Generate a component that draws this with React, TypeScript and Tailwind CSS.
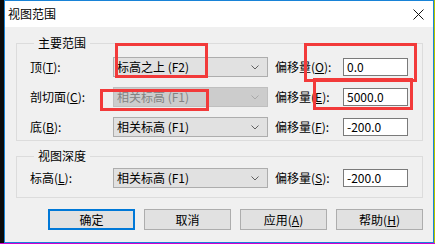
import React from "react";

type RowProps = {
  label: string;
  labelKey: string;
  labelTail?: string;
  value: string;
  disabled?: boolean;
  offsetKey: string;
  offset: string;
};

function Chevron({ disabled }: { disabled?: boolean }) {
  return (
    <svg width="8" height="5" viewBox="0 0 8 5" className="shrink-0">
      <polyline
        points="0.5,0.5 4,4 7.5,0.5"
        fill="none"
        stroke={disabled ? "#a8a8a8" : "#606060"}
        strokeWidth="1"
      />
    </svg>
  );
}

function Row({ label, labelKey, value, disabled, offsetKey, offset }: RowProps) {
  return (
    <div className="flex h-[20px] items-center">
      <div className="w-[83px] shrink-0 text-[12px] leading-[16px]">
        {label}(<u>{labelKey}</u>):
      </div>
      <div
        className={
          disabled
            ? "flex h-[20px] w-[155px] shrink-0 items-center justify-between border border-[#bfbfbf] bg-[#cccccc] pr-[8px] pl-[3px] text-[12px] leading-[16px] text-[#838383]"
            : "flex h-[20px] w-[155px] shrink-0 items-center justify-between border border-[#adadad] bg-[#e1e1e1] pr-[8px] pl-[3px] text-[12px] leading-[16px] text-black"
        }
      >
        <span>{value}</span>
        <Chevron disabled={disabled} />
      </div>
      <div className="ml-[7px] w-[68px] shrink-0 text-[12px] leading-[16px]">
        偏移量(<u>{offsetKey}</u>):
      </div>
      <div className="flex h-[18px] w-[65px] shrink-0 items-center border border-[#7a7a7a] bg-white pl-[3px] text-[12px] leading-[16px]">
        {offset}
      </div>
    </div>
  );
}

function Btn({ children, primary }: { children: React.ReactNode; primary?: boolean }) {
  return (
    <div
      className={
        primary
          ? "flex h-[21px] w-[87px] items-center justify-center border-2 border-[#0078d7] bg-[#e1e1e1] text-[12px] leading-[16px]"
          : "flex h-[21px] w-[87px] items-center justify-center border border-[#adadad] bg-[#e1e1e1] text-[12px] leading-[16px]"
      }
    >
      {children}
    </div>
  );
}

export default function App() {
  return (
    <div
      className="relative flex h-[244px] w-[435px] flex-col overflow-hidden bg-[#0b0b0b] text-black"
      style={{ fontFamily: '"Noto Sans CJK SC", "Noto Sans", sans-serif' }}
    >
      <div className="flex">
        <div className="w-[4px] shrink-0" />
        <div className="flex h-[243px] w-[430px] flex-col border border-[#1883d7] bg-[#f0f0f0]">
          {/* title bar */}
          <div className="flex h-[26px] shrink-0 items-center justify-between bg-white pr-[9px] pl-[3px]">
            <span className="text-[12px] leading-[16px]">视图范围</span>
            <svg width="11" height="11" viewBox="0 0 11 11">
              <path d="M0.5 0.5 L10.5 10.5 M10.5 0.5 L0.5 10.5" stroke="#111" strokeWidth="1" />
            </svg>
          </div>

          <div className="flex flex-1 flex-col pr-[10px] pl-[11px]">
            <fieldset className="mt-[8px] border border-[#dcdcdc] pr-[13px] pb-[3px] pl-[13px]">
              <legend className="ml-[4px] px-[4px] text-[12px] leading-[16px]">主要范围</legend>
              <div className="flex flex-col gap-[10px] pt-[6px]">
                <Row label="顶" labelKey="T" value="标高之上 (F2)" offsetKey="O" offset="0.0" />
                <Row label="剖切面" labelKey="C" value="相关标高 (F1)" disabled offsetKey="E" offset="5000.0" />
                <Row label="底" labelKey="B" value="相关标高 (F1)" offsetKey="F" offset="-200.0" />
              </div>
            </fieldset>

            <fieldset className="mt-[7px] border border-[#dcdcdc] pr-[13px] pb-[9px] pl-[13px]">
              <legend className="ml-[4px] px-[4px] text-[12px] leading-[16px]">视图深度</legend>
              <div className="pt-[4px]">
                <Row label="标高" labelKey="L" value="相关标高 (F1)" offsetKey="S" offset="-200.0" />
              </div>
            </fieldset>

            <div className="mt-[11px] flex justify-end gap-[9px] pr-[0px]">
              <Btn primary>确定</Btn>
              <Btn>取消</Btn>
              <Btn>
                应用(<u>A</u>)
              </Btn>
              <Btn>
                帮助(<u>H</u>)
              </Btn>
            </div>
          </div>
        </div>
        <div className="w-[1px] shrink-0 bg-[#b5c400]" />
      </div>
      <div className="h-[1px] bg-[#d000d0]" />

      {/* red annotation boxes */}
      <div className="absolute top-[43px] left-[115px] h-[35px] w-[93px] border-[3px] border-[#f23a3a]" />
      <div className="absolute top-[89px] left-[100px] h-[22px] w-[109px] border-[3px] border-[#f23a3a]" />
      <div className="absolute top-[43px] left-[304px] h-[39px] w-[113px] border-[3px] border-[#f23a3a]" />
      <div className="absolute top-[78px] left-[313px] h-[32px] w-[100px] border-[3px] border-[#f23a3a]" />
    </div>
  );
}
